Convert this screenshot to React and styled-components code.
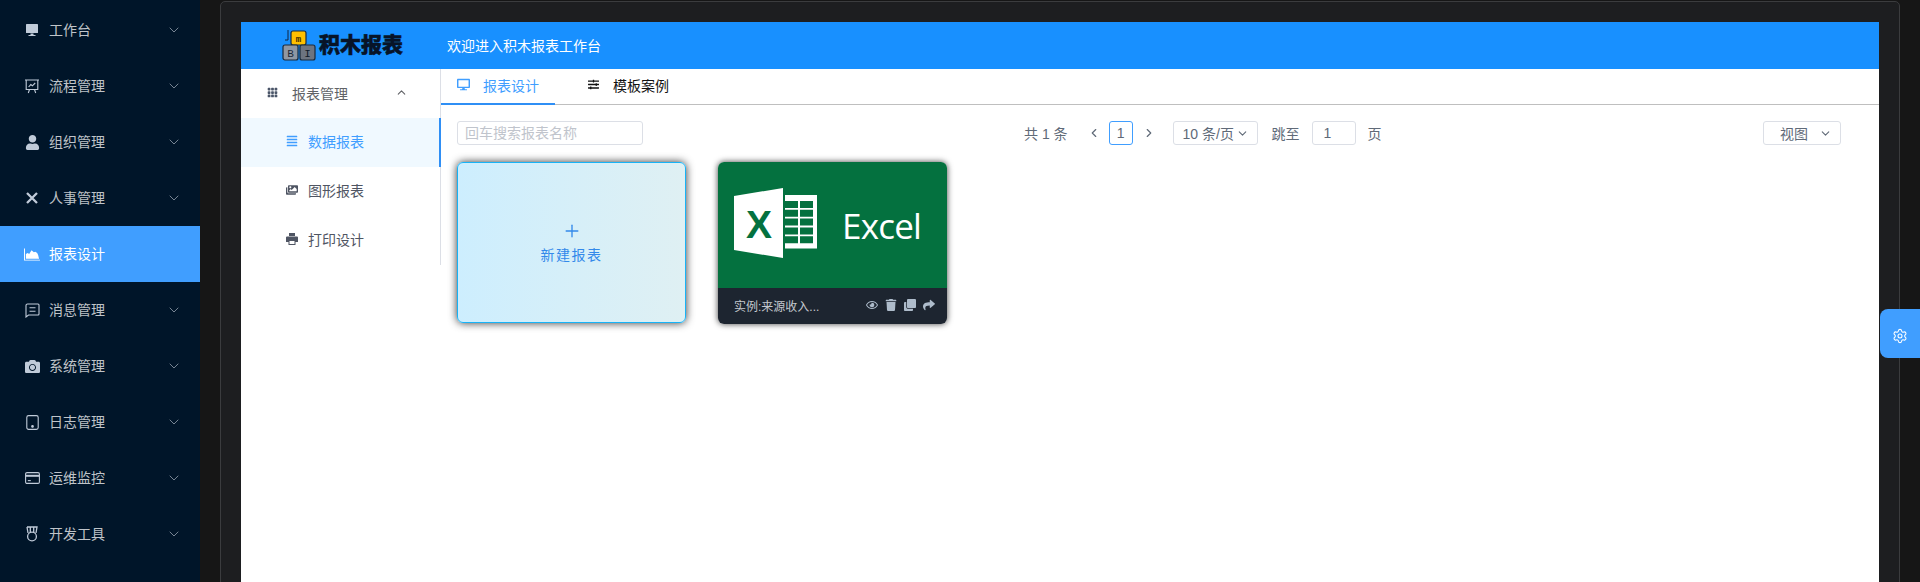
import React from 'react';
import styled, { createGlobalStyle } from 'styled-components';
import {
  FaDesktop, FaUser, FaCamera, FaAlignJustify, FaImages,
  FaSlidersH, FaRegEye, FaTrash, FaClone, FaShare,
} from 'react-icons/fa';
import { BsGrid3X3GapFill } from 'react-icons/bs';
import { ChevronDown, ChevronUp, ChevronLeft, ChevronRight, Settings, Plus } from 'lucide-react';

const font = '"Liberation Sans", "Noto Sans CJK SC", sans-serif';

const Global = createGlobalStyle`
  html, body { margin: 0; padding: 0; height: 582px; overflow: hidden; background: #161616; }
  * { box-sizing: border-box; }
  body { font-family: ${font}; font-size: 14px; }
`;

const Page = styled.div`
  position: relative;
  display: flex;
  width: 1920px;
  height: 582px;
  overflow: hidden;
  background: #161616;
`;

const Sidebar = styled.nav`
  flex: 0 0 200px;
  padding-top: 2px;
  background: #001529;
`;

const MenuItem = styled.div`
  display: flex;
  align-items: center;
  height: 56px;
  padding: 0 18px 0 24px;
  color: ${p => (p.$active ? '#fff' : 'rgba(255,255,255,.75)')};
  background: ${p => (p.$active ? '#409eff' : 'transparent')};
`;

const MenuIcon = styled.span`
  display: flex;
  align-items: center;
  justify-content: center;
  width: 16px;
  height: 16px;
  margin-right: 9px;
  font-size: 15px;
  color: ${p => (p.$active ? '#fff' : '#c0cbd9')};
`;

const MenuLabel = styled.span`
  flex: 1;
  font-size: 14px;
  line-height: 20px;
`;

const Chevron = styled.span`
  display: flex;
  color: #a3aebb;
`;

const Stage = styled.main`
  flex: 1;
  min-width: 0;
  padding: 1px 20px 0 20px;
`;

const Frame = styled.div`
  display: flex;
  flex-direction: column;
  height: 600px;
  padding: 20px 20px 0 20px;
  background: #1d1e20;
  border: 1px solid #3b3c3e;
  border-radius: 5px 5px 0 0;
`;

const Banner = styled.header`
  flex: 0 0 47px;
  display: flex;
  align-items: center;
  padding: 0 0 1px 41px;
  background: #1890ff;
  color: #fff;
`;

const LogoMark = styled.svg`
  flex: none;
  width: 34px;
  height: 34px;
`;

const LogoText = styled.span`
  margin-left: 3px;
  width: 84px;
  font-size: 21px;
  font-weight: 900;
  line-height: 24px;
  color: #071428;
  -webkit-text-stroke: .5px #071428;
  white-space: nowrap;
`;

const Welcome = styled.span`
  margin-left: 44px;
  font-size: 14px;
`;

const Body = styled.div`
  flex: 1;
  display: flex;
  background: #fff;
`;

const SubNav = styled.aside`
  flex: 0 0 200px;
  align-self: flex-start;
  border-right: 1px solid #dcdfe6;
`;

const SubHead = styled.div`
  display: flex;
  align-items: center;
  height: 49px;
  padding: 0 32px 2px 26px;
  color: #606266;
`;

const SubHeadIcon = styled.span`
  display: flex;
  margin-right: 14px;
  font-size: 11px;
  color: #4a5568;
`;

const SubHeadLabel = styled.span`
  flex: 1;
`;

const SubItem = styled.div`
  display: flex;
  align-items: center;
  height: 49px;
  padding: 0 0 3px 45px;
  color: ${p => (p.$active ? '#409eff' : '#4f5563')};
  background: ${p => (p.$active ? '#f0f9ff' : 'transparent')};
  border-right: ${p => (p.$active ? '2px solid #2f8ff5' : 'none')};
  margin-right: ${p => (p.$active ? '-1px' : '0')};
`;

const SubIcon = styled.span`
  display: flex;
  width: 22px;
  font-size: 12px;
`;

const Content = styled.section`
  flex: 1;
  min-width: 0;
  display: flex;
  flex-direction: column;
`;

const Tabs = styled.div`
  display: flex;
  height: 36px;
  border-bottom: 1px solid #bfbfbf;
`;

const Tab = styled.div`
  display: flex;
  align-items: center;
  height: 36px;
  padding: 0 16px;
  margin-left: ${p => p.$ml || 0}px;
  width: ${p => p.$w}px;
  color: ${p => (p.$active ? '#409eff' : '#111')};
  border-bottom: ${p => (p.$active ? '2px solid #2f8ff5' : 'none')};
  padding-bottom: ${p => (p.$active ? '3px' : '5px')};
`;

const TabIcon = styled.span`
  display: flex;
  width: ${p => p.$w || 26}px;
  font-size: ${p => p.$size || 13}px;
`;

const Toolbar = styled.div`
  display: flex;
  align-items: center;
  height: 24px;
  margin: 16px 38px 0 16px;
`;

const Search = styled.div`
  flex: 0 0 186px;
  height: 24px;
  padding: 0 7px;
  line-height: 22px;
  border: 1px solid #dcdfe6;
  border-radius: 3px;
  color: #c0c4cc;
`;

const Pager = styled.div`
  display: flex;
  align-items: center;
  margin-left: 381px;
  color: #606a78;
  font-size: 14px;
`;

const PagerText = styled.span`
  margin-left: ${p => p.$ml || 0}px;
  white-space: nowrap;
`;

const PagerArrow = styled.span`
  display: flex;
  margin: 0 ${p => p.$mr ?? 8}px 0 ${p => p.$ml ?? 8}px;
  color: #606a78;
`;

const PageBox = styled.span`
  display: flex;
  align-items: center;
  justify-content: center;
  width: 24px;
  height: 24px;
  border: 1px solid #409eff;
  border-radius: 3px;
  color: #606a78;
`;

const SizeSelect = styled.span`
  display: flex;
  align-items: center;
  justify-content: space-between;
  width: 85px;
  height: 24px;
  margin-left: 9px;
  padding: 0 8px 0 9px;
  border: 1px solid #dcdfe6;
  border-radius: 3px;
  white-space: nowrap;
`;

const JumpInput = styled.span`
  display: flex;
  align-items: center;
  width: 44px;
  height: 24px;
  margin-left: 12px;
  padding-left: 11px;
  border: 1px solid #dcdfe6;
  border-radius: 3px;
`;

const ViewButton = styled.div`
  display: flex;
  align-items: center;
  justify-content: space-between;
  width: 78px;
  height: 24px;
  margin-left: auto;
  padding: 0 8px 0 16px;
  border: 1px solid #dcdfe6;
  border-radius: 3px;
  color: #606a78;
`;

const Cards = styled.div`
  display: flex;
  gap: 32px;
  margin: 17px 0 0 16px;
`;

const NewCard = styled.div`
  display: flex;
  flex-direction: column;
  align-items: center;
  justify-content: center;
  width: 229px;
  height: 161px;
  border: 1px solid #17b3f7;
  border-radius: 6px;
  background: linear-gradient(90deg, #cdeefe 0%, #dff0f3 100%);
  box-shadow: 0 0 8px rgba(0, 0, 0, .8);
  color: #3389ea;
`;

const NewLabel = styled.span`
  margin-top: 3px;
  font-size: 14px;
  letter-spacing: 1.5px;
`;

const ReportCard = styled.div`
  display: flex;
  flex-direction: column;
  width: 229px;
  height: 162px;
  border-radius: 6px;
  overflow: hidden;
  box-shadow: 0 0 6px rgba(0, 0, 0, .75);
`;

const Cover = styled.div`
  flex: 1;
  display: flex;
  align-items: center;
  padding-left: 16px;
  background: #04713f;
`;

const ExcelMark = styled.svg`
  flex: none;
  width: 84px;
  height: 72px;
  margin-top: -3px;
`;

const ExcelWord = styled.span`
  margin-left: 24px;
  font-family: "Open Sans", sans-serif;
  font-size: 35px;
  font-weight: 400;
  letter-spacing: -.8px;
  color: #fff;
`;

const CardFoot = styled.div`
  flex: 0 0 36px;
  display: flex;
  align-items: center;
  padding: 0 12px 2px 16px;
  background: #1d2530;
  color: #c3c8ce;
`;

const CardTitle = styled.span`
  flex: 1;
  font-size: 12px;
`;

const CardTools = styled.span`
  display: flex;
  align-items: center;
  gap: 7px;
  font-size: 12px;
  color: #aebccb;
`;

const Handle = styled.div`
  position: absolute;
  top: 309px;
  right: 0;
  display: flex;
  align-items: center;
  justify-content: center;
  width: 40px;
  height: 49px;
  padding-top: 5px;
  background: #409eff;
  border-radius: 8px 0 0 8px;
  color: #fff;
`;

const Monitor = () => (
  <svg width="14" height="14" viewBox="0 0 14 14" fill="currentColor">
    <rect x="1" y="1" width="12" height="9" rx=".6" />
    <path d="M5.500 10.500h3v1.500h2v1h-7v-1h2z" />
  </svg>
);

const Presentation = () => (
  <svg width="16" height="15" viewBox="0 0 16 15" fill="none" stroke="currentColor" strokeWidth="1.100">
    <path d="M1 1h14M2.200 1v9.500h11.600V1M5.500 10.500l-1.200 3.500M10.500 10.500l1.200 3.500" />
    <path d="M4.600 8l2.200-2.400 1.600 1.200 2.800-2.800" />
  </svg>
);

const Cross = () => (
  <svg width="12" height="12" viewBox="0 0 12 12" fill="none" stroke="currentColor" strokeWidth="2.300">
    <path d="M1 1l10 10M11 1L1 11" />
  </svg>
);

const AreaChart = () => (
  <svg width="17" height="13" viewBox="0 0 17 13" fill="currentColor">
    <path d="M0 0h1v12h16v1H0z" />
    <path d="M2 11V6l2-1 1.500 1L8 2l2.500 2 1.500-.5L14 5l1 2 1 4z" />
  </svg>
);

const Medal = () => (
  <svg width="14" height="16" viewBox="0 0 14 16" fill="none" stroke="currentColor" strokeWidth="1.300">
    <circle cx="7" cy="10.500" r="4.400" />
    <path d="M2 1h10l-1 6M2 1l1 6M5.300 1v5M8.700 1v5" />
  </svg>
);

const Message = () => (
  <svg width="15" height="15" viewBox="0 0 15 15" fill="none" stroke="currentColor" strokeWidth="1.100">
    <path d="M2.500 1h10.500a1 1 0 0 1 1 1v9a1 1 0 0 1-1 1H3.500L1 14V2.500A1.500 1.500 0 0 1 2.500 1z" />
    <path d="M4.500 4.800h6M4.500 8.200h6" />
  </svg>
);

const Tablet = () => (
  <svg width="13" height="15" viewBox="0 0 13 15" fill="none" stroke="currentColor" strokeWidth="1.100">
    <rect x=".8" y=".6" width="11.400" height="13.800" rx="1.800" />
    <circle cx="6.500" cy="11.400" r=".8" fill="currentColor" />
  </svg>
);

const Card = () => (
  <svg width="15" height="12" viewBox="0 0 15 12" fill="none" stroke="currentColor" strokeWidth="1.100">
    <rect x=".6" y=".6" width="13.800" height="10.800" rx="1.400" />
    <path d="M.6 3.800h13.800" strokeWidth="2" />
    <path d="M2.800 8.600h3" />
  </svg>
);

const Printer = () => (
  <svg width="12" height="12" viewBox="0 0 12 12" fill="currentColor">
    <path d="M3 0h6v3H3z" />
    <path fillRule="evenodd" d="M1 3.500h10a1 1 0 0 1 1 1V9H9.500v3h-7V9H0V4.500a1 1 0 0 1 1-1zM3.500 8v3h5V8z" />
  </svg>
);

const menus = [
  { label: '工作台', icon: <Monitor /> },
  { label: '流程管理', icon: <Presentation /> },
  { label: '组织管理', icon: <FaUser /> },
  { label: '人事管理', icon: <Cross /> },
  { label: '报表设计', icon: <AreaChart />, active: true, leaf: true },
  { label: '消息管理', icon: <Message /> },
  { label: '系统管理', icon: <FaCamera /> },
  { label: '日志管理', icon: <Tablet /> },
  { label: '运维监控', icon: <Card /> },
  { label: '开发工具', icon: <Medal /> },
];

const subs = [
  { label: '数据报表', icon: <FaAlignJustify />, active: true },
  { label: '图形报表', icon: <FaImages /> },
  { label: '打印设计', icon: <Printer /> },
];

const LogoSvg = () => (
  <LogoMark viewBox="0 0 34 34">
    <path d="M6 2v10H3" fill="none" stroke="#10233f" strokeWidth="1" />
    <rect x="9" y="3" width="15" height="14" rx="2" fill="#ffc000" stroke="#1c2a3a" strokeWidth="1.200" />
    <text x="16.500" y="14" textAnchor="middle" fontFamily="Liberation Mono, monospace" fontSize="9" fontWeight="700" fill="#3a2a00">m</text>
    <rect x="1" y="17" width="15" height="15" rx="2" fill="#8f97a3" stroke="#1c2a3a" strokeWidth="1.200" />
    <text x="8.500" y="29" textAnchor="middle" fontFamily="Liberation Mono, monospace" fontSize="11" fill="#1c2a3a">B</text>
    <rect x="18" y="17" width="15" height="15" rx="2" fill="#6d7480" stroke="#1c2a3a" strokeWidth="1.200" />
    <text x="25.500" y="29" textAnchor="middle" fontFamily="Liberation Mono, monospace" fontSize="11" fill="#111c2a">I</text>
  </LogoMark>
);

const ExcelSvg = () => (
  <ExcelMark viewBox="0 0 84 72">
    <path d="M0 8 49 0v70L0 62z" fill="#fff" />
    <path d="M51 7h32v53.500H51z" fill="#fff" />
    <path d="M51 13h13v7H51zM66 13h13v7H66zM51 21.800h13v7H51zM66 21.800h13v7H66zM51 30.600h13v7H51zM66 30.600h13v7H66zM51 39.400h13v7H51zM66 39.400h13v7H66zM51 48.200h13v7H51zM66 48.200h13v7H66z" fill="#04713f" />
    <text x="25" y="50" textAnchor="middle" fontFamily="Liberation Sans, sans-serif" fontSize="39" fontWeight="700" fill="#04713f">X</text>
  </ExcelMark>
);

export default function App() {
  return (
    <>
      <Global />
      <Page>
        <Sidebar>
          {menus.map(m => (
            <MenuItem key={m.label} $active={m.active}>
              <MenuIcon $active={m.active}>{m.icon}</MenuIcon>
              <MenuLabel>{m.label}</MenuLabel>
              {!m.leaf && <Chevron><ChevronDown size={16} strokeWidth={1.100} /></Chevron>}
            </MenuItem>
          ))}
        </Sidebar>
        <Stage>
          <Frame>
            <Banner>
              <LogoSvg />
              <LogoText>积木报表</LogoText>
              <Welcome>欢迎进入积木报表工作台</Welcome>
            </Banner>
            <Body>
              <SubNav>
                <SubHead>
                  <SubHeadIcon><BsGrid3X3GapFill /></SubHeadIcon>
                  <SubHeadLabel>报表管理</SubHeadLabel>
                  <ChevronUp size={13} strokeWidth={2} />
                </SubHead>
                {subs.map(s => (
                  <SubItem key={s.label} $active={s.active}>
                    <SubIcon>{s.icon}</SubIcon>
                    {s.label}
                  </SubItem>
                ))}
              </SubNav>
              <Content>
                <Tabs>
                  <Tab $active $w={114}><TabIcon><FaDesktop /></TabIcon>报表设计</Tab>
                  <Tab $w={120} $ml={17}><TabIcon $size={11} $w={25}><FaSlidersH /></TabIcon>模板案例</Tab>
                </Tabs>
                <Toolbar>
                  <Search>回车搜索报表名称</Search>
                  <Pager>
                    <PagerText>共 1 条</PagerText>
                    <PagerArrow $ml={19}><ChevronLeft size={14} /></PagerArrow>
                    <PageBox>1</PageBox>
                    <PagerArrow $ml={9}><ChevronRight size={14} /></PagerArrow>
                    <SizeSelect>10 条/页<ChevronDown size={13} /></SizeSelect>
                    <PagerText $ml={14}>跳至</PagerText>
                    <JumpInput>1</JumpInput>
                    <PagerText $ml={12}>页</PagerText>
                  </Pager>
                  <ViewButton>视图<ChevronDown size={13} /></ViewButton>
                </Toolbar>
                <Cards>
                  <NewCard>
                    <Plus size={20} strokeWidth={1.600} />
                    <NewLabel>新建报表</NewLabel>
                  </NewCard>
                  <ReportCard>
                    <Cover>
                      <ExcelSvg />
                      <ExcelWord>Excel</ExcelWord>
                    </Cover>
                    <CardFoot>
                      <CardTitle>实例:来源收入...</CardTitle>
                      <CardTools>
                        <FaRegEye /><FaTrash /><FaClone /><FaShare />
                      </CardTools>
                    </CardFoot>
                  </ReportCard>
                </Cards>
              </Content>
            </Body>
          </Frame>
        </Stage>
        <Handle><Settings size={16} strokeWidth={1.600} /></Handle>
      </Page>
    </>
  );
}
